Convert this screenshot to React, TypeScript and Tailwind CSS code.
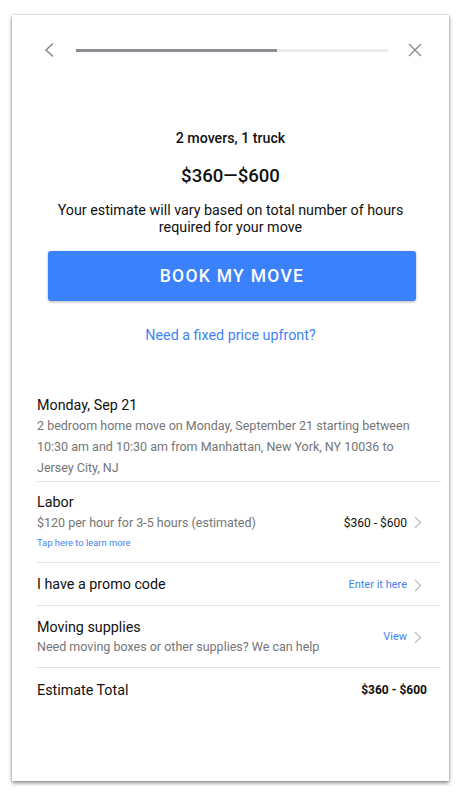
const Chevron = ({ className = '' }: { className?: string }) => (
  <svg width="8" height="13" viewBox="0 0 8 13" fill="none" className={className}>
    <path d="M1 1l5.5 5.5L1 12" stroke="#bdbdbd" strokeWidth="1.3" />
  </svg>
);

const App = () => {
  return (
    <div className="min-h-[796px] w-[460px] bg-white pt-[15px] font-['Roboto',sans-serif]">
      <div className="ml-[12px] flex h-[766px] w-[437px] flex-col bg-white shadow-[0_2px_4px_rgba(0,0,0,0.45),0_0_2px_rgba(0,0,0,0.2)]">
        {/* header */}
        <div className="flex h-[70px] items-center pl-[31px] pr-[27px]">
          <svg width="12" height="16" viewBox="0 0 12 16" fill="none">
            <path d="M10 1.5L3 8l7 6.5" stroke="#8a8a8e" strokeWidth="1.6" />
          </svg>
          <div className="ml-[21px] h-[3px] w-[312px] bg-[#ebecee]">
            <div className="h-full w-[201px] bg-[#8b8d93]" />
          </div>
          <svg width="14" height="14" viewBox="0 0 14 14" fill="none" className="ml-[20px]">
            <path d="M1 1l12 12M13 1L1 13" stroke="#8a8a8e" strokeWidth="1.4" />
          </svg>
        </div>

        <div className="mt-[43px] text-center text-[14.2px] font-medium leading-[20px] text-[#111]">
          2 movers, 1 truck
        </div>
        <div className="mt-[16px] text-center text-[18.6px] font-medium leading-[24px] text-[#111]">
          $360—$600
        </div>
        <p className="mt-[14px] text-center text-[14.3px] leading-[17px] text-[#111]">
          Your estimate will vary based on total number of hours
          <br />
          required for your move
        </p>
        <button className="ml-[36px] mt-[15px] h-[50px] w-[368px] rounded-[3px] bg-[#3b81fc] text-[17.5px] font-medium tracking-[1.3px] text-white shadow-[0_1px_3px_rgba(0,0,0,0.3)]">
          BOOK MY MOVE
        </button>
        <div className="mt-[24px] text-center text-[14.3px] leading-[20px] text-[#3f84f4]">
          Need a fixed price upfront?
        </div>

        {/* summary list */}
        <div className="ml-[25px] mr-[8px] mt-[50px] flex flex-col">
          <div className="border-b border-[#e4e4e4] pb-[3px]">
            <div className="text-[14.3px] leading-[20px] text-[#111]">Monday, Sep 21</div>
            <div className="text-[12.5px] leading-[21px] text-[#757575]">
              2 bedroom home move on Monday, September 21 starting between
              <br />
              10:30 am and 10:30 am from Manhattan, New York, NY 10036 to
              <br />
              Jersey City, NJ
            </div>
          </div>

          <div className="flex items-center border-b border-[#e4e4e4] pb-[12px] pr-[19px] pt-[10px]">
            <div className="flex-1">
              <div className="text-[14.3px] leading-[20px] text-[#111]">Labor</div>
              <div className="text-[12.5px] leading-[21px] text-[#757575]">$120 per hour for 3-5 hours (estimated)</div>
              <div className="mt-[3px] text-[9.4px] leading-[14px] text-[#3f84f4]">Tap here to learn more</div>
            </div>
            <div className="mt-[3px] flex items-center gap-[7px]">
              <span className="text-[12px] text-[#111]">$360 - $600</span>
              <Chevron />
            </div>
          </div>

          <div className="flex h-[43px] items-center border-b border-[#e4e4e4] pr-[19px]">
            <div className="flex-1 text-[14.3px] leading-[20px] text-[#111]">I have a promo code</div>
            <div className="mt-[2px] flex items-center gap-[7px]">
              <span className="text-[11px] text-[#3f84f4]">Enter it here</span>
              <Chevron />
            </div>
          </div>

          <div className="flex items-center border-b border-[#e4e4e4] pb-[10px] pr-[19px] pt-[11px]">
            <div className="flex-1">
              <div className="text-[14.3px] leading-[20px] text-[#111]">Moving supplies</div>
              <div className="text-[12.5px] leading-[20px] text-[#757575]">Need moving boxes or other supplies? We can help</div>
            </div>
            <div className="flex items-center gap-[7px]">
              <span className="text-[11px] text-[#3f84f4]">View</span>
              <Chevron />
            </div>
          </div>

          <div className="flex items-center pr-[14px] pt-[12px]">
            <div className="flex-1 text-[14.3px] leading-[20px] text-[#111]">Estimate Total</div>
            <span className="text-[12px] font-bold text-[#111]">$360 - $600</span>
          </div>
        </div>
      </div>
    </div>
  );
};

export default App;
